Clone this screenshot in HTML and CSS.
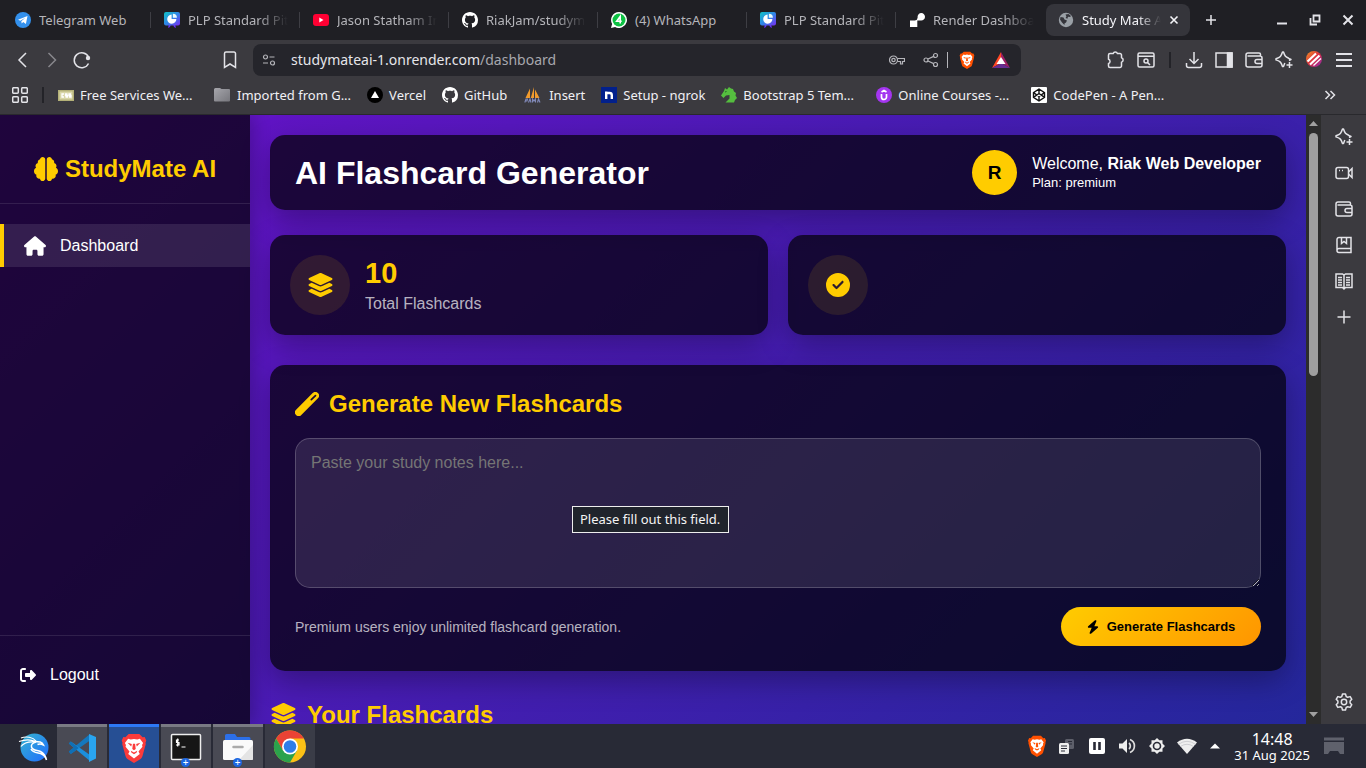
FILE: index.html
```html
<!DOCTYPE html>
<html lang="en">
<head>
<meta charset="utf-8">
<meta name="viewport" content="width=device-width, initial-scale=1">
<title>Study Mate AI</title>
<link rel="stylesheet" href="styles.css">
</head>
<body>
<svg class="defs" aria-hidden="true">
  <defs>
    <linearGradient id="plpg" x1="0" y1="0" x2="1" y2="1"><stop offset="0" stop-color="#12c4c4"/><stop offset=".5" stop-color="#2f86e8"/><stop offset="1" stop-color="#7a2cf0"/></linearGradient>
    <linearGradient id="kalig" x1="0" y1="0" x2="1" y2="1"><stop offset="0" stop-color="#35b5cf"/><stop offset="1" stop-color="#1f6bff"/></linearGradient>
    <linearGradient id="leog" x1="0" y1="0" x2="1" y2="1"><stop offset="0" stop-color="#f59a23"/><stop offset=".5" stop-color="#d92d3f"/><stop offset="1" stop-color="#8c2bb8"/></linearGradient>
    <linearGradient id="folderg" x1="0" y1="0" x2="1" y2="1"><stop offset="0" stop-color="#a6a6ac"/><stop offset="1" stop-color="#77777d"/></linearGradient>
  </defs>
  <symbol id="plp" viewBox="0 0 16 16"><path d="M5 12l-1 4 2-1 1-3zM11 12l1 4-2-1-1-3z" fill="#6a2cf0"/><rect width="16" height="13.500" rx="2" fill="url(#plpg)"/><path d="M7.600 2.500v4.600h4.800A4.600 4.600 0 1 1 7.600 2.500z" fill="#fff"/><path d="M8.900 1.800a4 4 0 0 1 4 4h-4z" fill="#e8fbff"/></symbol>
  <symbol id="github" viewBox="0 0 16 16"><path fill="#fff" d="M8 0C3.58 0 0 3.58 0 8c0 3.54 2.29 6.53 5.47 7.59.4.07.55-.17.55-.38 0-.19-.01-.82-.01-1.49-2.01.37-2.53-.49-2.69-.94-.09-.23-.48-.94-.82-1.13-.28-.15-.68-.52-.01-.53.63-.01 1.08.58 1.23.82.72 1.21 1.87.87 2.33.66.07-.52.28-.87.51-1.07-1.78-.2-3.64-.89-3.64-3.95 0-.87.31-1.59.82-2.15-.08-.2-.36-1.02.08-2.12 0 0 .67-.21 2.2.82.64-.18 1.32-.27 2-.27.68 0 1.36.09 2 .27 1.53-1.04 2.2-.82 2.2-.82.44 1.1.16 1.92.08 2.12.51.56.82 1.27.82 2.15 0 3.07-1.87 3.75-3.65 3.95.29.25.54.73.54 1.48 0 1.07-.01 1.93-.01 2.2 0 .21.15.46.55.38A8.013 8.013 0 0 0 16 8c0-4.42-3.58-8-8-8z"/></symbol>
  <symbol id="brave" viewBox="0 0 24 28"><path d="M7 1h10l3 3 2-.3 1.500 3.500-.8 2 .3 1-3 11c-.4 1.500-1 2.300-2.200 3.200L12 28l-5.800-3.600C5 23.500 4.400 22.700 4 21.200l-3-11 .3-1-.8-2L2 3.700 4 4z" class="brave-bg"/><path d="M12 5.500l3 .6 2.500-.8 3 4-1 2 .4 1.500-3.700 4.400 1.200 2.300-5.400 4.300-5.400-4.300 1.200-2.300-3.700-4.400.4-1.500-1-2 3-4 2.500.8z" fill="#fff"/><path d="M6 9.200l4 1-.6 2.300zM18 9.200l-4 1 .6 2.300zM11 10h2l.6 5-1.600 1-1.600-1zM9 16.500l3 1.600 3-1.600-.5 1.800-2.500 1.500-2.500-1.500z" class="brave-bg"/></symbol>
  <symbol id="layers" viewBox="0 0 576 512"><path fill="currentColor" d="M264.500 5.200c14.900-6.900 32.100-6.900 47 0l218.600 101c8.500 3.900 13.900 12.400 13.900 21.800s-5.400 17.900-13.900 21.800l-218.600 101c-14.900 6.900-32.100 6.900-47 0L45.900 149.800C37.400 145.800 32 137.300 32 128s5.400-17.900 13.900-21.800L264.500 5.200zM476.900 209.600l53.200 24.600c8.500 3.900 13.900 12.400 13.900 21.800s-5.400 17.900-13.900 21.800l-218.600 101c-14.900 6.900-32.100 6.900-47 0L45.900 277.800C37.400 273.800 32 265.300 32 256s5.400-17.900 13.900-21.800l53.200-24.600 152 70.200c23.400 10.800 50.400 10.800 73.800 0l152-70.200zm-152 198.200l152-70.200 53.200 24.600c8.500 3.900 13.900 12.400 13.900 21.800s-5.400 17.900-13.900 21.800l-218.600 101c-14.900 6.900-32.100 6.900-47 0L45.900 405.800C37.400 401.800 32 393.300 32 384s5.400-17.900 13.900-21.800l53.200-24.600 152 70.200c23.400 10.800 50.400 10.800 73.800 0z"/></symbol>
  <symbol id="wallet" viewBox="0 0 20 20"><path d="M16.500 6V4.500a1.500 1.500 0 0 0-1.500-1.500H4a2 2 0 0 0-2 2v10a2 2 0 0 0 2 2h12a2 2 0 0 0 2-2V8a2 2 0 0 0-2-2H3.500M18 9.500h-5a1.900 1.900 0 0 0 0 4h5"/></symbol>
  <symbol id="spark" viewBox="0 0 20 20"><path d="M15 10.500l2-1-2.300-1.200C11.500 7 11 6.500 9.500 2h-1C7 6.500 6.500 7 2 8.700v1.200C6.500 11.500 7 12 8.500 16.500h1L10.800 13M15.500 12v6M12.500 15h6" stroke-linejoin="round"/></symbol>
</svg>
<div class="desktop">
  <header class="chrome">
    <nav class="tabs" aria-label="Tabs">
      <a class="tab" href="#"><svg class="i16" viewBox="0 0 16 16"><circle cx="8" cy="8" r="8" fill="#3390ec"/><path d="M3 7.800l9.500-3.700-1.600 8-2.700-2-1.500 1.400-.4-2.300 4-3.500-5 3.100z" fill="#fff"/></svg><span>Telegram Web</span></a>
      <a class="tab fade" href="#"><svg class="i16"><use href="#plp"/></svg><span>PLP Standard Pitch</span></a>
      <a class="tab fade" href="#"><svg class="i16" viewBox="0 0 16 16"><rect y="2" width="16" height="12" rx="3" fill="#ff0033"/><path d="M6.300 5.500v5l4.200-2.500z" fill="#fff"/></svg><span>Jason Statham Interview</span></a>
      <a class="tab fade" href="#"><svg class="i16"><use href="#github"/></svg><span>RiakJam/studymate</span></a>
      <a class="tab" href="#"><svg class="i16" viewBox="0 0 16 16"><path d="M8 0a8 8 0 1 1-3.900 15L0 16l1.100-4A8 8 0 0 1 8 0z" fill="#fff"/><circle cx="8" cy="8" r="6.500" fill="#0dc143"/><path d="M9.200 11.500v-7L5.700 9.300h5" fill="none" stroke="#fff" stroke-width="1.600"/></svg><span>(4) WhatsApp</span></a>
      <a class="tab fade" href="#"><svg class="i16"><use href="#plp"/></svg><span>PLP Standard Pitch</span></a>
      <a class="tab fade last" href="#"><svg class="i16" viewBox="0 0 16 16"><path d="M1 15V8.500h5a3 3 0 0 0 2.600-2.800V5A3.700 3.700 0 1 1 12 8.500H8.300V15z" fill="#fff"/></svg><span>Render Dashboard</span></a>
      <a class="tab fade active" href="#" aria-current="page"><svg class="i16" viewBox="0 0 16 16"><circle cx="8" cy="8" r="7.200" fill="#9aa0a6"/><path d="M2.500 5l3 .5 1 2 2.500 1-1 2-1.500 1v1.500L4 10.500l-2-3zM7.500 2.500l3-.6 2.500 2-1 1.200-2-.3-.6 2-1.800-.8.8-1.500z" fill="#35353b"/></svg><span>Study Mate AI</span><svg class="close" viewBox="0 0 10 10"><path d="M1.500 1.500l7 7M8.500 1.500l-7 7"/></svg></a>
      <button class="bare newtab" aria-label="New tab"><svg class="i12" viewBox="0 0 12 12"><path d="M6 1v10M1 6h10"/></svg></button>
      <div class="win">
        <button class="bare" aria-label="Minimize"><svg class="i12" viewBox="0 0 12 12"><path d="M1 9.500h10" stroke-width="2"/></svg></button>
        <button class="bare" aria-label="Restore"><svg class="i12" viewBox="0 0 12 12"><path d="M4.500 1.500h6v6h-6zM1.500 4v6.500H8" stroke-width="1.800"/></svg></button>
        <button class="bare" aria-label="Close"><svg class="i12" viewBox="0 0 12 12"><path d="M1.500 1.500l9 9M10.500 1.500l-9 9" stroke-width="2"/></svg></button>
      </div>
    </nav>
    <div class="toolbar">
      <button class="bare" aria-label="Back"><svg class="i20" viewBox="0 0 20 20"><path d="M14 3L7 10l7 7"/></svg></button>
      <button class="bare dim" aria-label="Forward"><svg class="i20" viewBox="0 0 20 20"><path d="M6.500 3l7 7-7 7"/></svg></button>
      <button class="bare reload" aria-label="Reload"><svg class="i20" viewBox="0 0 20 20"><path d="M16.500 7A7.500 7.500 0 1 0 16.500 13.500"/><circle cx="16" cy="8" r="2.200" fill="#e3e3e8" stroke="none"/></svg></button>
      <button class="bare mark" aria-label="Bookmark"><svg class="i20" viewBox="0 0 20 20"><path d="M4.500 3.500a1.500 1.500 0 0 1 1.500-1.500h8a1.500 1.500 0 0 1 1.500 1.500V17.500L10 14l-5.500 3.500z"/></svg></button>
      <div class="omnibox">
        <svg class="i14" viewBox="0 0 14 14"><circle cx="3.500" cy="4" r="2"/><path d="M7.500 4h5M1 10h5"/><circle cx="10.500" cy="10" r="2"/></svg>
        <a class="url" href="#">studymateai-1.onrender.com<span>/dashboard</span></a>
        <svg class="i16 soft" viewBox="0 0 16 16"><circle cx="4.500" cy="8" r="4"/><circle cx="4.500" cy="8" r="1.700"/><path d="M8.500 6.500h7v3h-2v2.500h-2V9.500h-3"/></svg>
        <svg class="i16 soft share" viewBox="0 0 16 16"><circle cx="3" cy="8" r="2"/><circle cx="12.500" cy="3.500" r="2"/><circle cx="12.500" cy="12.500" r="2"/><path d="M5 7l5.700-2.600M5 9l5.700 2.600"/></svg>
        <i class="urlsep"></i>
        <svg class="shield orange"><use href="#brave"/></svg>
        <svg class="bat" viewBox="0 0 18 16"><path d="M9 0L0 16l9-5z" fill="#ff4724"/><path d="M9 0l9 16-9-5z" fill="#9e1f63"/><path d="M0 16h18l-9-5z" fill="#662d91"/><path d="M9 5l4.500 7h-9z" fill="#fff"/></svg>
      </div>
      <div class="actions">
        <button class="bare" aria-label="Extensions"><svg class="i20" viewBox="0 0 20 20"><path d="M4 3.500h3.200a2.200 2.200 0 0 1 4.200 0H14a1.500 1.500 0 0 1 1.500 1.500v2.700a2.300 2.300 0 0 1 0 4.400V16a1.500 1.500 0 0 1-1.500 1.500H4A1.500 1.500 0 0 1 2.500 16v-2.500a2.200 2.200 0 0 0 0-4.200V5A1.500 1.500 0 0 1 4 3.500z" stroke-linejoin="round"/></svg></button>
        <button class="bare" aria-label="Search tabs"><svg class="i20" viewBox="0 0 20 20"><rect x="2" y="3" width="16" height="14" rx="1.500"/><path d="M2 6.300h16M11.500 12.500l2.500 2.500"/><circle cx="10" cy="11" r="2"/></svg></button>
        <i class="toolsep"></i>
        <button class="bare" aria-label="Downloads"><svg class="i20" viewBox="0 0 20 20"><path d="M10 2v11M5.500 9l4.500 4.500L14.500 9M2.500 13v2.500a2 2 0 0 0 2 2h11a2 2 0 0 0 2-2V13"/></svg></button>
        <button class="bare" aria-label="Sidebar"><svg class="i20" viewBox="0 0 20 20"><rect x="2" y="3" width="16" height="14"/><path d="M13.500 3H18v14h-4.500z" fill="#e3e3e8"/></svg></button>
        <button class="bare" aria-label="Wallet"><svg class="i20"><use href="#wallet"/></svg></button>
        <button class="bare" aria-label="Leo AI"><svg class="i20"><use href="#spark"/></svg></button>
        <button class="bare" aria-label="Profile"><svg class="i20" viewBox="0 0 20 20"><circle cx="10" cy="9" r="8" fill="url(#leog)" stroke="none"/><path d="M3.500 11.500L12 3.500M6 14.500L15.500 5.500" stroke="#fff" stroke-width="2.200"/><path d="M9.500 15.500l7.500-7" stroke="#fff" stroke-width="1.200"/></svg></button>
        <button class="bare" aria-label="Menu"><svg class="i20" viewBox="0 0 20 20"><path d="M2 4h16M2 10h16M2 16h16" stroke-width="1.800"/></svg></button>
      </div>
    </div>
    <nav class="bookmarks" aria-label="Bookmarks">
      <button class="bare" aria-label="Apps"><svg class="i16" viewBox="0 0 16 16"><rect x=".7" y=".7" width="5.600" height="5.600" rx="1"/><rect x="9.700" y=".7" width="5.600" height="5.600" rx="1"/><rect x=".7" y="9.700" width="5.600" height="5.600" rx="1"/><rect x="9.700" y="9.700" width="5.600" height="5.600" rx="1"/></svg></button>
      <i class="toolsep"></i>
      <a href="#" class="bm wide"><svg class="i16" viewBox="0 0 16 16"><rect y="3" width="16" height="11" fill="#b4b178"/><rect x="1.500" y="4.500" width="13" height="8" fill="#d8d6a8"/><path d="M6 7H4v3h2M9.500 7h-2v1.500h2V10h-2M13 7h-2v1.500h2V10h-2" fill="none" stroke="#fff" stroke-width="1.300"/></svg><span>Free Services We...</span></a>
      <a href="#" class="bm"><svg class="i18" viewBox="0 0 18 16"><path d="M1 2.500a1.500 1.500 0 0 1 1.500-1.500H7l1.500 1H16a1 1 0 0 1 1 1v10.500a1 1 0 0 1-1 1H2a1 1 0 0 1-1-1z" fill="url(#folderg)"/></svg><span>Imported from G...</span></a>
      <a href="#" class="bm"><svg class="i16" viewBox="0 0 16 16"><circle cx="8" cy="8" r="8" fill="#000"/><path d="M8 4l4 7H4z" fill="#fff"/></svg><span>Vercel</span></a>
      <a href="#" class="bm"><svg class="i16"><use href="#github"/></svg><span>GitHub</span></a>
      <a href="#" class="bm"><svg class="i20 sail" viewBox="0 0 18 16"><path d="M6 1.500L1.500 11H6zM10 0L6.800 11H10zM11 2.500l4.500 8.500H11z" fill="#f29b2c"/><path d="M.8 15.500L2 12h1.500l-.5 2H1.500M4.500 15.500L6 12l1 3.500M8.500 15.500V12l1.500 2 1.500-2v3.500M13.500 15.500l1-3.500 1.500 3.500" fill="none" stroke="#8189b8" stroke-width="1.100"/></svg><span>Insert</span></a>
      <a href="#" class="bm"><svg class="i16" viewBox="0 0 16 16"><rect width="16" height="16" fill="#02208c"/><path d="M5.200 12V4.500M5.200 6h3.400q2.200 0 2.200 2.200V12" fill="none" stroke="#fff" stroke-width="2.400"/></svg><span>Setup - ngrok</span></a>
      <a href="#" class="bm wide"><svg class="i16" viewBox="0 0 16 16"><path d="M0 8.500L3 4l1-3 2 1.500L8 0l2 1.500 2 .5 1 2.500 2 1.500-.5 2.500L16 11l-2 2-1 2.500H4.500l4-4L8.500 8 5 8.500 2.500 11z" fill="#55bd3f"/><path d="M4 5l1.500-.5" stroke="#24632a" stroke-width="1"/></svg><span>Bootstrap 5 Tem...</span></a>
      <a href="#" class="bm wide"><svg class="i16" viewBox="0 0 16 16"><circle cx="8" cy="8" r="8" fill="#a435f0"/><path d="M5.500 7v3a2.500 2.500 0 0 0 5 0V7M5.500 5L8 3.500 10.500 5" fill="none" stroke="#fff" stroke-width="1.700"/></svg><span>Online Courses -...</span></a>
      <a href="#" class="bm"><svg class="i16" viewBox="0 0 16 16"><rect width="16" height="16" rx="1" fill="#fff"/><path d="M8 2l5.500 3.700v4.600L8 14l-5.500-3.700V5.700zM2.500 5.700L8 9.500l5.500-3.800M2.500 10.300L8 6.500l5.500 3.800M8 2v4.500M8 9.500V14" fill="none" stroke="#111" stroke-width="1.400"/></svg><span>CodePen - A Pen...</span></a>
      <button class="bare more" aria-label="More bookmarks"><svg class="i12" viewBox="0 0 12 12"><path d="M1.500 2l4 4-4 4M6.500 2l4 4-4 4"/></svg></button>
    </nav>
  </header>

  <div class="window">
    <div class="page">
      <aside class="side">
        <div class="brand"><svg class="i24" viewBox="0 0 512 512"><path fill="currentColor" d="M184 0c30.900 0 56 25.100 56 56V456c0 30.900-25.100 56-56 56c-28.900 0-52.700-21.900-55.700-50.100c-5.200 1.400-10.700 2.100-16.300 2.100c-35.300 0-64-28.700-64-64c0-7.400 1.300-14.600 3.600-21.200C21.400 367.400 0 338.200 0 304c0-31.900 18.700-59.500 45.800-72.300C37.100 220.800 32 207 32 192c0-30.700 21.600-56.300 50.400-62.600C80.800 123.900 80 118 80 112c0-29.900 20.600-55.100 48.300-62.100C131.300 21.900 155.100 0 184 0zM328 0c28.900 0 52.600 21.900 55.700 49.900c27.800 7 48.300 32.100 48.300 62.100c0 6-.8 11.900-2.400 17.400c28.800 6.200 50.400 31.900 50.400 62.600c0 15-5.100 28.800-13.800 39.700C493.300 244.500 512 272.100 512 304c0 34.200-21.400 63.400-51.600 74.800c2.300 6.600 3.600 13.800 3.600 21.200c0 35.300-28.700 64-64 64c-5.600 0-11.100-.7-16.300-2.100c-3 28.200-26.800 50.100-55.700 50.100c-30.900 0-56-25.100-56-56V56c0-30.900 25.100-56 56-56z"/></svg><span>StudyMate AI</span></div>
        <nav class="menu"><a href="#"><svg class="home" viewBox="0 0 576 512"><path fill="#fff" d="M575.800 255.500c0 18-15 32.100-32 32.100h-32l.7 160.200c0 2.700-.2 5.400-.5 8.100V472c0 22.100-17.900 40-40 40H456c-1.100 0-2.200 0-3.300-.1c-1.400 .1-2.800 .1-4.200 .1H416 392c-22.100 0-40-17.900-40-40V448 384c0-17.700-14.300-32-32-32H256c-17.700 0-32 14.300-32 32v64 24c0 22.100-17.900 40-40 40H160 128.100c-1.500 0-3-.1-4.500-.2c-1.200 .1-2.400 .2-3.600 .2H104c-22.100 0-40-17.900-40-40V360c0-.9 0-1.900 .1-2.800V287.600H32c-18 0-32-14-32-32.100c0-9 3-17 10-24L266.400 8c7-7 15-8 22-8s15 2 21 7L564.800 231.500c8 7 12 15 11 24z"/></svg><span>Dashboard</span></a></nav>
        <div class="signout"><a href="#"><svg class="i16" viewBox="0 0 512 512"><path fill="#fff" d="M377.900 105.900L500.700 228.700c7.200 7.200 11.300 17.100 11.300 27.300s-4.100 20.100-11.300 27.300L377.900 406.100c-6.400 6.400-15 9.900-24 9.900c-18.700 0-33.900-15.200-33.900-33.900l0-62.100-128 0c-17.700 0-32-14.300-32-32l0-64c0-17.700 14.300-32 32-32l128 0 0-62.100c0-18.700 15.200-33.900 33.900-33.900c9 0 17.600 3.600 24 9.900zM160 96L96 96c-17.700 0-32 14.300-32 32l0 256c0 17.700 14.300 32 32 32l64 0c17.700 0 32 14.300 32 32s-14.300 32-32 32l-64 0c-53 0-96-43-96-96L0 128C0 75 43 32 96 32l64 0c17.700 0 32 14.300 32 32s-14.300 32-32 32z"/></svg><span>Logout</span></a></div>
      </aside>
      <main class="main">
        <section class="card top">
          <h1>AI Flashcard Generator</h1>
          <div class="user"><div class="avatar">R</div><div><p class="welcome">Welcome, <strong>Riak Web Developer</strong></p><p class="plan">Plan: premium</p></div></div>
        </section>
        <section class="stats">
          <div class="card stat"><div class="badge"><svg class="layers"><use href="#layers"/></svg></div><div><p class="num">10</p><p class="lbl">Total Flashcards</p></div></div>
          <div class="card stat"><div class="badge"><svg class="i24" viewBox="0 0 512 512"><path fill="currentColor" d="M256 512A256 256 0 1 0 256 0a256 256 0 1 0 0 512zM369 209L241 337c-9.400 9.400-24.600 9.400-33.900 0l-64-64c-9.400-9.400-9.400-24.600 0-33.900s24.600-9.400 33.900 0l47 47L335 175c9.400-9.400 24.600-9.400 33.900 0s9.400 24.600 0 33.900z"/></svg></div></div>
        </section>
        <form class="card gen" onsubmit="return false">
          <h2><svg class="i24" viewBox="0 0 24 24"><path d="M3.700 20.300L20.300 3.700" stroke="currentColor" stroke-width="7.400" stroke-linecap="round"/><path d="M16.300 7.700l4.200-4" stroke="#190633" stroke-width="1.700" stroke-linecap="round"/></svg><label for="notes">Generate New Flashcards</label></h2>
          <div class="field"><textarea id="notes" placeholder="Paste your study notes here..."></textarea><div class="tip" role="tooltip">Please fill out this field.</div></div>
          <div class="foot"><p>Premium users enjoy unlimited flashcard generation.</p><button class="go"><svg class="bolt" viewBox="0 0 448 512"><path fill="#000" d="M349.400 44.600c5.900-13.700 1.500-29.700-10.600-38.500s-28.600-8-39.900 1.800l-256 224c-10 8.800-13.600 22.900-8.900 35.300S50.700 288 64 288H175.500L98.600 467.400c-5.900 13.700-1.500 29.700 10.600 38.500s28.600 8 39.900-1.800l256-224c10-8.800 13.600-22.900 8.900-35.300s-16.600-20.700-30-20.700H272.500L349.400 44.600z"/></svg>Generate Flashcards</button></div>
        </form>
        <h2 class="yours"><svg class="layers"><use href="#layers"/></svg>Your Flashcards</h2>
      </main>
    </div>
    <div class="scroll"><svg viewBox="0 0 9 5"><path d="M0 5L4.500 0 9 5z"/></svg><div class="track"><div class="thumb"></div></div><svg viewBox="0 0 9 5"><path d="M0 0l4.500 5L9 0z"/></svg></div>
    <aside class="rail">
      <button class="bare" aria-label="Leo AI"><svg class="i20"><use href="#spark"/></svg></button>
      <button class="bare" aria-label="Talk"><svg class="i20" viewBox="0 0 20 20"><rect x="2" y="4.500" width="12.500" height="11" rx="2"/><path d="M14.500 9l3.500-3.500v9L14.500 11M5 7.500h1M8 7.500h1"/></svg></button>
      <button class="bare" aria-label="Wallet"><svg class="i20"><use href="#wallet"/></svg></button>
      <button class="bare" aria-label="Bookmarks"><svg class="i20" viewBox="0 0 20 20"><path d="M17 13.500V2.500H5a2 2 0 0 0-2 2v11a2 2 0 0 0 2 2h12v-4H5a2 2 0 0 0-2 2M7.500 2.500v6l2.500-2 2.500 2v-6"/></svg></button>
      <button class="bare" aria-label="Reading list"><svg class="i20" viewBox="0 0 20 20"><path d="M2 3h6.500L10 4l1.500-1H18v13.500h-6.500L10 18l-1.500-1.500H2zM10 4v13M4 6.500h4M4 9h4M4 11.500h4M4 14h4M12 6.500h4M12 9h4M12 11.500h4M12 14h4"/></svg></button>
      <button class="bare" aria-label="Add"><svg class="i20" viewBox="0 0 20 20"><path d="M10 3.500v13M3.500 10h13"/></svg></button>
      <button class="bare end" aria-label="Settings"><svg class="i20" viewBox="0 0 20 20"><path d="M8.500 2h3l.7 2.500 1.500.8 2.500-.7 1.600 2.700-1.700 1.800v1.800l1.700 1.800-1.600 2.700-2.500-.7-1.500.8-.7 2.500h-3l-.7-2.500-1.500-.8-2.500.7-1.600-2.700 1.700-1.800V9.100L2.200 7.300l1.600-2.700 2.500.7 1.500-.8z" stroke-linejoin="round"/><circle cx="10" cy="10" r="2.700"/></svg></button>
    </aside>
  </div>

  <footer class="taskbar">
    <button class="app plain" aria-label="Applications"><svg class="i32" viewBox="0 0 32 32"><circle cx="17.500" cy="15.500" r="14" fill="url(#kalig)"/><path d="M4 6c5-2 12-1 15 3M2 9.500c6-2 12-2 16.500 0M4 14.500c3-4 8-5 14-4.500" fill="none" stroke="#fff" stroke-width="1.200"/><path d="M18 9.500c4 0 7 0 8.500 3.500-2-1-4-1.500-6-.5M19 10c-4 1-5 3-4.500 5 1 4 6 3 9 4.500 3 1.500 5 4 6 8.500-1-3.500-3-5.500-6-6.500-4-1-8-1-9.500-4.500" fill="none" stroke="#fff" stroke-width="1.500"/></svg></button>
    <button class="app" aria-label="Visual Studio Code"><svg class="i32" viewBox="0 0 32 32"><path d="M24 2L2.800 19.500l2 2.500L24 8.500z" fill="#1478bd"/><path d="M2.800 11.500l2-2L24 23v6z" fill="#1b8fdc"/><path d="M23 2l7 3v21.500L23 30z" fill="#29a5f0"/><path d="M2.800 11.500L8 15.800l-5.200 3.700L4.800 22l8-6-8-6.500z" fill="#0f6fb5"/></svg></button>
    <button class="app current" aria-label="Brave"><svg class="i30 red"><use href="#brave"/></svg></button>
    <button class="app" aria-label="Terminal"><svg class="i32" viewBox="0 0 32 32"><rect x="1.500" y="2.500" width="29" height="25" rx="1" fill="#161616" stroke="#eee" stroke-width="1.500"/><path d="M9 8H6.500v2.500H9V13H6M7.700 6.500v8M11.500 15h4" fill="none" stroke="#fff" stroke-width="1.200"/></svg><span class="plus">+</span></button>
    <button class="app" aria-label="Files"><svg class="i32" viewBox="0 0 32 32"><path d="M3 3.500a1.500 1.500 0 0 1 1.500-1.500H13L15 5h12a1.500 1.500 0 0 1 1.500 1.500V12H3z" fill="#2c6fe8"/><rect x="1" y="8" width="30" height="20" rx="1.500" fill="#fafafa"/><path d="M31 13v13.500a1.500 1.500 0 0 1-1.500 1.500H17z" fill="#e4e4e4"/><path d="M11.500 15h9" stroke="#aaa" stroke-width="2.500" stroke-linecap="round"/></svg><span class="plus">+</span></button>
    <button class="app faint" aria-label="Chrome"><svg class="i32" viewBox="0 0 32 32"><circle cx="16" cy="14.500" r="16" fill="#fbc116"/><path d="M2.100 6.500A16 16 0 0 1 29.900 6.500H16l-7 12z" fill="#ea4335"/><path d="M2.100 6.500A16 16 0 0 0 16 30.500l7-12H9z" fill="#2ba24c"/><circle cx="16" cy="14.500" r="8" fill="#fff"/><circle cx="16" cy="14.500" r="6.300" fill="#2f7de9"/></svg></button>
    <div class="tray">
      <svg class="i20 tall orange"><use href="#brave"/></svg>
      <svg class="i20" viewBox="0 0 20 20"><rect x="8" y="3" width="9" height="10" rx="1.500" fill="#5d5f6a"/><path d="M11 5.500h4M11 8h4" stroke="#282a36" stroke-width="1"/><rect x="2" y="7" width="10" height="11" rx="1.500" fill="#eee"/><path d="M4 10h6M4 12.500h6M4 15h4" stroke="#282a36"/></svg>
      <svg class="i20" viewBox="0 0 20 20"><rect x="2" y="2" width="16" height="16" rx="2" fill="#fff"/><path d="M7.500 6v8M12.500 6v8" stroke="#282a36" stroke-width="2.600"/></svg>
      <svg class="i20" viewBox="0 0 20 20"><path d="M2 7.500h3.500L10 3v14l-4.500-4.500H2z" fill="#eee"/><path d="M12 7a4 4 0 0 1 0 6M13 3.500a7 7 0 0 1 0 13" stroke="#ddd" stroke-width="1.700"/></svg>
      <svg class="i20" viewBox="0 0 20 20"><path d="M10 2l2.300 2.300h3.200v3.200L18 10l-2.500 2.500v3.200h-3.200L10 18l-2.300-2.300H4.500v-3.200L2 10l2.500-2.500V4.300h3.200z" fill="#eee"/><circle cx="10" cy="10" r="4.300" fill="#282a36"/><circle cx="10" cy="10" r="2.700" fill="#eee"/></svg>
      <svg class="i20" viewBox="0 0 20 20"><path d="M0 6.500Q10-1 20 6.500L10 18z" fill="#eee"/><path d="M1.500 8.300q8.500-6 17 0M3.500 10.500q6.500-4.500 13 0" stroke="#c5c5ca" stroke-width=".8"/></svg>
      <svg class="i10" viewBox="0 0 10 6"><path d="M0 5.500L5 .5l5 5z" fill="#fff"/></svg>
    </div>
    <div class="clock"><time>14:48</time><span>31 Aug 2025</span></div>
    <button class="bare show" aria-label="Show desktop"><svg class="i20" viewBox="0 0 20 20"><path d="M0 1.500h20v3H0zM0 6h20v12h-4l-2-3H6l-2 3H0z" fill="#5f616c" stroke="none"/></svg></button>
  </footer>
</div>
</body>
</html>
```
FILE: styles.css
```css
* { box-sizing: border-box; }
body { margin: 0; font-family: "Noto Sans", sans-serif; font-size: 13px; background: #1f1f24; }
h1, h2, p { margin: 0; }
a { color: inherit; text-decoration: none; }
svg { display: block; flex: none; fill: none; }
button { font: inherit; }
.defs { width: 0; height: 0; position: absolute; }

.i10 { width: 10px; height: 6px; }
.i12 { width: 12px; height: 12px; }
.i14 { width: 14px; height: 14px; }
.i16 { width: 16px; height: 16px; }
.i18 { width: 18px; height: 16px; }
.i20 { width: 20px; height: 20px; }
.i24 { width: 24px; height: 24px; }
.i30 { width: 30px; height: 30px; }
.i32 { width: 32px; height: 32px; }
.sail { height: 16px; }
.orange { color: #ff5000; }
.red { color: #fb3b3b; }
.brave-bg { fill: currentColor; }

.bare { display: block; padding: 0; border: 0; background: none; flex: none; }
.bare svg, .omnibox svg { stroke: #e3e3e8; stroke-width: 1.5; }
.dim { opacity: 0.45; }

.desktop { display: flex; flex-direction: column; height: 100vh; overflow: hidden; }

/* Tab strip */
.chrome { flex: none; color: #f0f0f4; background: #3b3a3f; }
.tabs { display: flex; align-items: center; height: 40px; padding-left: 2px; background: #1f1f24; }
.tab { display: flex; align-items: center; gap: 8px; flex: 0 1 149px; min-width: 0; height: 16px; padding: 0 11px 0 13px; border-right: 1px solid #3e3e44; color: #b5b5ba; white-space: nowrap; }
.tab span { flex: 1; overflow: hidden; }
.tab.fade span { mask-image: linear-gradient(to right, #000 70%, transparent); }
.tab.last { border-right: 0; }
.tab.active { flex-basis: 144px; height: 32px; margin-left: 1px; padding-left: 12px; border: 0; border-radius: 8px; background: #35353b; color: #f4f4f8; }
.close { width: 10px; height: 10px; stroke: #f4f4f8; stroke-width: 1.6; }
.newtab { margin-left: 15px; }
.win { display: flex; gap: 21px; margin-left: auto; padding-right: 12px; }

/* Toolbar */
.toolbar { display: flex; align-items: center; gap: 10px; height: 40px; padding: 0 12px; }
.mark { margin-left: 118px; }
.omnibox { display: flex; align-items: center; flex: 1; min-width: 0; height: 32px; padding: 0 11px 0 9px; margin-left: 3px; border-radius: 8px; background: #25252b; }
.omnibox .i14, .omnibox .soft { stroke: #b5b5ba; stroke-width: 1.2; }
.url { flex: 1; min-width: 0; overflow: hidden; padding-left: 15px; font-size: 14px; line-height: 20px; color: #e6e6ea; }
.url span { color: #a8a8ae; }
.share { margin-left: 18px; }
.urlsep { width: 1px; height: 16px; margin: 0 11px 0 8px; background: #b5b5ba; }
.omnibox .shield, .omnibox .bat { stroke: none; }
.shield { width: 16px; height: 18px; }
.bat { width: 18px; height: 16px; margin-left: 17px; }
.actions { display: flex; align-items: center; gap: 10px; margin-left: 75px; }
.toolsep { width: 8px; height: 16px; background: linear-gradient(#232328, #232328) center / 2px 100% no-repeat; }

/* Bookmarks */
.bookmarks { display: flex; align-items: center; gap: 16px; height: 35px; padding: 0 30px 4px 12px; border-bottom: 1px solid #29292d; white-space: nowrap; }
.bookmarks .toolsep { width: 4px; margin: 0 -3px; }
.bm { display: flex; align-items: center; gap: 6px; }
.bm.wide span { min-width: 117px; }
.more { margin-left: auto; }

/* Browser window body */
.window { display: flex; flex: 1; min-height: 0; }
.page { display: flex; flex: 1; min-width: 0; overflow: hidden; color: #fff; font: 16px/18px "Liberation Sans", Arial, sans-serif; background: linear-gradient(135deg, #6a11cb, #24279b); }
.side { position: relative; z-index: 1; display: flex; flex-direction: column; flex: none; width: 250px; background: rgba(0, 0, 0, 0.7); box-shadow: 5px 0 15px rgba(0, 0, 0, 0.2); }
.brand { display: flex; align-items: center; justify-content: center; gap: 7px; padding: 40px 0 20px; border-bottom: 1px solid rgba(255, 255, 255, 0.1); color: #ffcc00; font-size: 24px; font-weight: bold; line-height: 28px; }
.menu { padding-top: 20px; }
.menu a { display: flex; align-items: center; gap: 14px; height: 43px; padding-left: 20px; border-left: 4px solid #ffcc00; background: rgba(255, 255, 255, 0.1); }
.home { width: 22px; height: 20px; }
.signout { margin-top: auto; padding: 30px 20px; border-top: 1px solid rgba(255, 255, 255, 0.1); }
.signout a { display: flex; align-items: center; gap: 14px; height: 18px; margin-bottom: 10px; }

.main { flex: 1; min-width: 0; padding: 20px; }
.card { border-radius: 15px; background: rgba(0, 0, 0, 0.7); box-shadow: 0 10px 30px rgba(0, 0, 0, 0.3); }
.top { display: flex; align-items: center; justify-content: space-between; padding: 15px 25px; margin-bottom: 25px; }
h1 { font-size: 32px; line-height: 36px; }
.user { display: flex; align-items: center; gap: 15px; }
.avatar { display: grid; place-items: center; width: 45px; height: 45px; border-radius: 50%; background: #ffcc00; color: #000; font-size: 19px; font-weight: bold; }
.welcome { line-height: 20px; }
.plan { font-size: 13px; line-height: 18px; }
.stats { display: grid; grid-template-columns: 1fr 1fr; gap: 20px; margin-bottom: 30px; }
.stat { display: flex; align-items: center; gap: 15px; padding: 20px; }
.badge { display: grid; place-items: center; width: 60px; height: 60px; border-radius: 50%; background: rgba(255, 204, 0, 0.1); color: #ffcc00; }
.layers { width: 27px; height: 24px; }
.num { margin-bottom: 5px; color: #ffcc00; font-size: 29px; font-weight: bold; line-height: 33px; }
.lbl, .foot p { color: rgba(255, 255, 255, 0.7); }
.gen { padding: 25px; margin-bottom: 30px; }
h2 { display: flex; align-items: center; gap: 10px; color: #ffcc00; font-size: 24px; line-height: 28px; }
.gen h2 { margin-bottom: 20px; }
.field { position: relative; }
textarea { display: block; width: 100%; height: 150px; padding: 15px; border: 1px solid rgba(255, 255, 255, 0.2); border-radius: 15px; background: rgba(255, 255, 255, 0.1); color: #fff; font: inherit; resize: vertical; }
textarea::placeholder { color: #757575; }
.tip { position: absolute; left: 277px; top: 68px; padding: 3px 8px 4px 7px; border: 1px solid #eee; background: #20242c; color: #f4f4f4; font: 13px/18px "Noto Sans", sans-serif; white-space: nowrap; }
.foot { display: flex; align-items: center; justify-content: space-between; margin-top: 19px; }
.foot p { font-size: 14px; }
.go { display: flex; align-items: center; justify-content: center; gap: 8px; min-width: 200px; height: 39px; padding: 0 24px; border: 0; border-radius: 20px; background: linear-gradient(135deg, #ffcc00, #ff9500); color: #000; font-size: 13px; font-weight: bold; }
.bolt { width: 12px; height: 14px; }

.scroll { display: flex; flex-direction: column; align-items: center; flex: none; width: 15px; padding: 6px 0 7px; background: #2c2c2c; }
.scroll svg { width: 9px; height: 5px; fill: #a0a0a0; }
.track { flex: 1; padding-top: 7px; }
.thumb { width: 9px; height: 42%; border-radius: 5px; background: #9f9f9f; }
.rail { display: flex; flex-direction: column; align-items: center; gap: 16px; flex: none; width: 45px; padding: 12px 0; background: #3b3a3f; }
.end { margin-top: auto; }

/* Taskbar */
.taskbar { display: flex; align-items: center; gap: 2px; flex: none; height: 44px; padding: 0 22px 0 5px; background: #282a36; color: #fff; }
.app { position: relative; display: grid; place-items: center; width: 50px; height: 44px; padding: 0; border: 0; border-top: 3px solid #797a83; background: #494a54; }
.app.plain { padding-left: 6px; border-color: transparent; background: none; }
.app.current { border-color: #2d79f5; background: #264f94; }
.app.faint { border-color: #3a3c47; background: #3a3c47; }
.app .i32 { overflow: visible; }
.plus { position: absolute; right: 21px; bottom: 1px; width: 9px; height: 9px; border-radius: 50%; background: #1b66e0; color: #fff; font-size: 10px; line-height: 8px; }
.tray { display: flex; align-items: center; gap: 10px; margin-left: auto; }
.tall { height: 22px; }
.tray .i10 { margin-left: 3px; }
.clock { display: flex; flex-direction: column; align-items: center; margin: 0 12px; line-height: 14px; }
.clock time { font-size: 16px; line-height: 17px; }
```
